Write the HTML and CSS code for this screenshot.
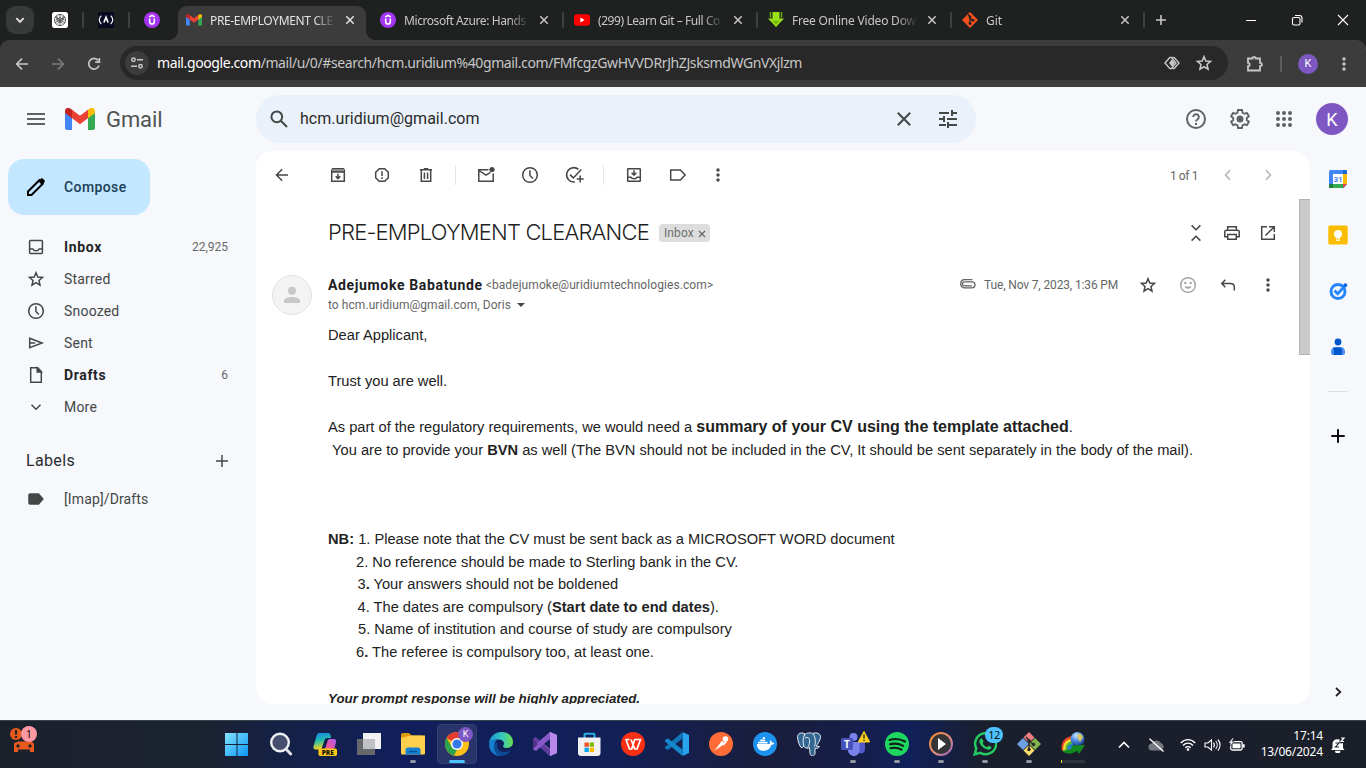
FILE: index.html
```html
<!DOCTYPE html>
<html lang="en">
<head>
<meta charset="utf-8">
<title>PRE-EMPLOYMENT CLEARANCE - Gmail</title>
<link rel="stylesheet" href="styles.css">
</head>
<body>
<svg class="defs" aria-hidden="true">
  <defs>
    <symbol id="x" viewBox="0 0 10 10"><path d="M1.3 1.3l7.4 7.4M8.7 1.3L1.3 8.7"/></symbol>
    <symbol id="dots" viewBox="0 0 20 20"><g fill="currentColor" stroke="none"><circle cx="10" cy="5" r="1.7"/><circle cx="10" cy="10" r="1.7"/><circle cx="10" cy="15" r="1.7"/></g></symbol>
    <symbol id="star" viewBox="0 0 20 20"><path d="M10 3.7l1.8 4.3 4.7.4-3.5 3.1 1 4.6-4-2.4-4 2.4 1-4.6-3.5-3.1 4.7-.4z"/></symbol>
    <symbol id="clock" viewBox="0 0 20 20"><circle cx="10" cy="10" r="7.3"/><path d="M9.9 5.3v5.2l3 3"/></symbol>
    <symbol id="udemy" viewBox="0 0 16 16"><circle cx="8" cy="8" r="8" fill="#a435f0" stroke="none"/><path d="M5.3 5L8 3.4 10.700 5M5.700 6.600v3.100a2.300 2.300 0 0 0 4.600 0V6.600" stroke="#fff" stroke-width="1.600"/></symbol>
    <symbol id="gmail" viewBox="0 0 30 22"><g stroke="none"><path fill="#4285f4" d="M0 5v15a2 2 0 0 0 2 2h5V8z"/><path fill="#34a853" d="M30 5v15a2 2 0 0 1-2 2h-5V8z"/><path fill="#ea4335" d="M6.800 1.600L15 7.800l8.200-6.200v8.400L15 16.200 6.800 10z"/><path fill="#c5221f" d="M0 3.200C0 .4 3-.9 5.200.5L7 1.800v8.500L0 5z"/><path fill="#fbbc04" d="M30 3.200C30 .4 27-.9 24.800.5L23 1.800v8.500L30 5z"/></g></symbol>
  </defs>
</svg>

<div class="tabstrip">
  <button class="tab-search"><svg width="10" height="10" viewBox="0 0 10 10"><path d="M1.300 3.200L5 6.900l3.700-3.700" stroke-width="1.800"/></svg></button>
  <div class="pinned"><svg width="16" height="16" viewBox="0 0 16 16"><rect width="16" height="16" rx="2.500" fill="#fff"/><g stroke="#333" stroke-width=".75"><circle cx="8" cy="8" r="5.600"/><path d="M8 2.400v5.400l4.800 3M3.200 5l4.800 2.900-5 2.900M13 5L8 8v5.600M5 4v4l5.500 3.300M11 4v4l-5.500 3.300M3.500 8.500L8 5.500l4.700 2.700"/></g></svg></div>
  <div class="pinned ruled"><svg width="16" height="16" viewBox="0 0 16 16"><rect width="16" height="16" fill="#0a0a23"/><g stroke="#fff" stroke-width="1.200"><path d="M3.300 3.800C.6 6 .6 9.500 3.300 12M12.700 3.800c2.700 2.200 2.700 5.700 0 8.200"/><path d="M5.900 10.500L8 5.200l2.100 5.300" stroke-width="1.700"/></g></svg></div>
  <div class="pinned ruled"><svg width="16" height="16"><use href="#udemy"/></svg></div>

  <div class="tab active"><svg class="fav" viewBox="0 -4 30 30"><use href="#gmail" width="30" height="22"/></svg><span class="tab-title t1">PRE-EMPLOYMENT CLE</span><svg class="tab-x"><use href="#x"/></svg></div>
  <div class="tab"><svg class="fav"><use href="#udemy"/></svg><span class="tab-title t2">Microsoft Azure: Hands</span><svg class="tab-x"><use href="#x"/></svg></div>
  <div class="tab ruled"><svg class="fav" viewBox="0 0 16 16"><rect y="2.300" width="16" height="11.500" rx="3" fill="#f00"/><path d="M6.400 5.600L10.600 8l-4.200 2.400z" fill="#fff"/></svg><span class="tab-title t3">(299) Learn Git – Full Co</span><svg class="tab-x"><use href="#x"/></svg></div>
  <div class="tab ruled"><svg class="fav" viewBox="0 0 16 16"><path d="M4.500 0h7v6.500H16L8 15 0 6.500h4.500z" fill="#9be319"/><path d="M2.500 0v5.500M13.500 0v5.500" stroke="#6fae10" stroke-width="1.500"/><path d="M4 8.500h8L8 13z" fill="#79bd0a"/></svg><span class="tab-title t4">Free Online Video Dow</span><svg class="tab-x"><use href="#x"/></svg></div>
  <div class="tab ruled last"><svg class="fav" viewBox="0 0 16 16"><path d="M8 0l8 8-8 8-8-8z" fill="#f4511e"/><path d="M6 2.500l2 2.200v7M8 6l3 2.500" stroke="#1f2020" stroke-width="1.200"/><g fill="#1f2020"><circle cx="8" cy="5" r="1.400"/><circle cx="8" cy="11.500" r="1.400"/><circle cx="11" cy="8.300" r="1.400"/></g></svg><span class="tab-title t5">Git</span><svg class="tab-x"><use href="#x"/></svg></div>
  <div class="newtab"><svg width="12" height="12" viewBox="0 0 12 12"><path d="M6 1v10M1 6h10" stroke-width="1.600"/></svg></div>
  <div class="wincontrols">
    <svg viewBox="0 0 12 12"><path d="M1 6.500h10" stroke-width="1"/></svg>
    <svg viewBox="0 0 12 12"><rect x="1.500" y="3.500" width="7.500" height="7.500" rx="1.500"/><path d="M4 1.500h4.500a2.500 2.500 0 0 1 2.500 2.500v4.500"/></svg>
    <svg viewBox="0 0 12 12"><path d="M1 1l10 10M11 1L1 11"/></svg>
  </div>
</div>

<div class="toolbar">
  <div class="navbtn"><svg width="16" height="16" viewBox="0 0 16 16"><path d="M14 8H3M8 2.700L2.700 8 8 13.300"/></svg></div>
  <div class="navbtn off"><svg width="16" height="16" viewBox="0 0 16 16"><path d="M2 8h11M8 2.700L13.300 8 8 13.300"/></svg></div>
  <div class="navbtn"><svg width="16" height="16" viewBox="0 0 16 16"><path d="M13 9.500A5.300 5.300 0 1 1 12.200 4.500M13.400 2v4.200H9.200"/></svg></div>
  <div class="omnibox">
    <span class="site"><svg width="14" height="14" viewBox="0 0 14 14"><circle cx="3.500" cy="3.800" r="1.700"/><path d="M7 3.800h6M1 10.200h6"/><circle cx="10.500" cy="10.200" r="1.700"/></svg></span>
    <span class="url"><b>mail.google.com</b>/mail/u/0/#search/hcm.uridium%40gmail.com/FMfcgzGwHVVDRrJhZJsksmdWGnVXjlzm</span>
    <svg class="omni-ic" viewBox="0 0 16 16"><path d="M5.800 2.500h1.700L12 8l-4.500 5.500H5.800L1 8zM10.200 2.500H8.500M8.500 13.500h1.700L15 8l-4.800-5.500"/><path d="M8 4.300L11 8l-3 3.700L5 8z" fill="#c7c7c7" stroke="none"/></svg>
    <svg class="omni-ic star" viewBox="2 2 16 16"><use href="#star" width="20" height="20"/></svg>
  </div>
  <svg class="ext" viewBox="0 0 18 18"><path d="M2 3.500h4.500c0-2.200 3.200-2.200 3.200 0H14v4.400c2.600 0 2.600 3.200 0 3.200v4.400H2v-4.300c2.200 0 2.200-3.400 0-3.400z"/></svg>
  <i class="tb-rule"></i>
  <span class="profile">K</span>
  <svg class="kebab" viewBox="0 0 20 20"><use href="#dots"/></svg>
</div>

<div class="gmail">
  <header class="ghead">
    <div class="brand">
      <svg class="burger" viewBox="0 0 18 12"><path d="M0 1h18M0 6h18M0 11h18"/></svg>
      <svg class="glogo"><use href="#gmail"/></svg>
      <span class="gword">Gmail</span>
    </div>
    <div class="search">
      <svg class="s-ic" viewBox="0 0 20 20"><circle cx="7.800" cy="7.800" r="5.400"/><path d="M11.800 11.800l6.200 6.200"/></svg>
      <span class="query">hcm.uridium@gmail.com</span>
      <svg class="s-x" viewBox="0 0 14 14"><path d="M.8.8l12.400 12.400M13.200.8L.8 13.200"/></svg>
      <svg class="s-tune" viewBox="0 0 18 18"><path d="M0 3h10M13 3h5M13 0v6M0 9h5M8 9h10M5 6v6M0 15h7M9 15h9M9 12v6"/></svg>
    </div>
    <div class="hright">
      <svg class="i24" viewBox="0 0 24 24"><circle cx="12" cy="12" r="9"/><path d="M9.200 10a2.800 2.800 0 1 1 4.500 2.200c-1 .7-1.700 1.300-1.700 2.300"/><path d="M12 16v2"/></svg>
      <svg class="i24" viewBox="0 0 24 24"><path stroke-width="1.900" d="M10 3h4l.5 2.700 1.900 1.100 2.500-.9 2 3.400-2.100 1.700v2.100l2.100 1.700-2 3.400-2.500-.9-1.900 1.100L14 21h-4l-.5-2.600-1.900-1.100-2.500.9-2-3.400 2.100-1.700V11L3.100 9.300l2-3.400 2.500.9 1.900-1.100z"/><circle cx="12" cy="12" r="3.500" fill="currentColor" stroke="none"/></svg>
      <svg class="i24" viewBox="0 0 24 24"><g fill="currentColor" stroke="none"><circle cx="6" cy="6" r="2"/><circle cx="12" cy="6" r="2"/><circle cx="18" cy="6" r="2"/><circle cx="6" cy="12" r="2"/><circle cx="12" cy="12" r="2"/><circle cx="18" cy="12" r="2"/><circle cx="6" cy="18" r="2"/><circle cx="12" cy="18" r="2"/><circle cx="18" cy="18" r="2"/></g></svg>
      <span class="gavatar">K</span>
    </div>
  </header>

  <div class="gbody">
    <nav class="side">
      <button class="compose"><svg viewBox="0 0 20 20"><path d="M2 18v-3.500L13.300 3.200l3.500 3.500L5.500 18z" stroke="#000" stroke-width="2"/><path d="M12.300 4.200L15 1.500c.5-.5 1.200-.5 1.700 0l1.800 1.800c.5.5.5 1.200 0 1.700l-2.700 2.700z" fill="#000"/></svg>Compose</button>
      <div class="folder bold"><svg viewBox="0 0 20 20"><rect x="3.600" y="3.600" width="12.800" height="12.800" rx="1"/><path d="M3.600 12h3.200c1 2.300 5.400 2.300 6.400 0h3.200"/></svg><span class="fn f-inbox">Inbox</span><span class="cnt">22,925</span></div>
      <div class="folder"><svg viewBox="0 0 20 20"><use href="#star"/></svg><span class="fn">Starred</span></div>
      <div class="folder"><svg viewBox="0 0 20 20"><use href="#clock"/></svg><span class="fn">Snoozed</span></div>
      <div class="folder"><svg viewBox="0 0 20 20"><path d="M3.700 5.300L16 10 3.700 14.700zM3.700 10h5.500"/></svg><span class="fn">Sent</span></div>
      <div class="folder bold"><svg viewBox="0 0 20 20"><path d="M4.700 2.800h7l3.600 3.700v10.700H4.700z"/><path d="M11.200 3v4h4z" fill="currentColor"/></svg><span class="fn f-drafts">Drafts</span><span class="cnt">6</span></div>
      <div class="folder"><svg viewBox="0 0 20 20"><path d="M5.500 7.800l4.500 4.400 4.500-4.400"/></svg><span class="fn">More</span></div>
      <div class="labels"><span>Labels</span><svg viewBox="0 0 12 12"><path d="M6 0v12M0 6h12"/></svg></div>
      <div class="folder imap"><svg viewBox="0 0 20 20"><path d="M4 5h8.500l4.300 5-4.300 5H4c-.8 0-1-.4-1-1V6c0-.6.300-1 1-1z" fill="currentColor"/></svg><span class="fn">[Imap]/Drafts</span></div>
    </nav>

    <main class="card">
      <div class="actions">
        <span class="a back"><svg viewBox="0 0 20 20"><path d="M16 10H4.800M10.200 4.300L4.500 10l5.700 5.700"/></svg></span>
        <span class="a"><svg viewBox="0 0 20 20"><path d="M3.700 5.300l1-1.600h10.600l1 1.600v11H3.700z"/><path d="M4 4h12v3H4z" fill="#8c8e8f" stroke="none"/><path d="M3.700 7h12.600M10 8.800v4.500M7.700 11.300l2.300 2.300 2.300-2.300"/></svg></span>
        <span class="a"><svg viewBox="0 0 20 20"><path d="M7.300 3.700h5.400l3.600 3.600v5.400l-3.600 3.600H7.300l-3.600-3.600V7.300z"/><path d="M10 6.200v4.800M10 12.300v1.700"/></svg></span>
        <span class="a"><svg viewBox="0 0 20 20"><path d="M4 4.800h12M7.800 3.700h4.400M5.300 5v11.300h9.400V5M8.400 7.500v6.500M11.600 7.500v6.500"/></svg></span>
        <i class="sep"></i>
        <span class="a"><svg viewBox="0 0 20 20"><path d="M12.500 4.700H2.800v11.600h14.400V8.500M3 5.500l7 4.700 4.500-2.900"/><circle cx="16" cy="4.500" r="2.600" fill="currentColor" stroke="none"/></svg></span>
        <span class="a"><svg viewBox="0 0 20 20"><use href="#clock"/></svg></span>
        <span class="a"><svg viewBox="0 0 20 20"><path d="M14.500 4.400A7.200 7.200 0 1 0 10.800 17M6 9.600l3.300 3.300 8-8.400M16.200 10.500v7M12.700 14h7"/></svg></span>
        <i class="sep"></i>
        <span class="a"><svg viewBox="0 0 20 20"><rect x="3.700" y="3.700" width="12.600" height="12.600" rx=".6"/><path d="M3.700 12.300h3.200c.8 2 5.400 2 6.200 0h3.200M10 5.200v4.500M7.600 7.800l2.400 2.400 2.400-2.400"/></svg></span>
        <span class="a"><svg viewBox="0 0 20 20"><path d="M2.700 5h9.700l4.700 5-4.700 5H2.700z"/></svg></span>
        <span class="a narrow"><svg viewBox="0 0 20 20"><use href="#dots"/></svg></span>
        <span class="pager">1 of 1</span>
        <span class="a pg"><svg viewBox="0 0 20 20"><path d="M12 5.300L7.500 10l4.500 4.700"/></svg></span>
        <span class="a pg"><svg viewBox="0 0 20 20"><path d="M8 5.300l4.500 4.700L8 14.700"/></svg></span>
      </div>

      <div class="reader">
        <div class="message">
          <div class="subject-row">
            <h1 class="subject">PRE-EMPLOYMENT CLEARANCE</h1>
            <span class="chip"><span>Inbox</span><svg viewBox="0 0 8 8"><path d="M1 1l6 6M7 1L1 7"/></svg></span>
            <span class="sub-icons">
              <svg viewBox="0 0 20 20"><path d="M5.600 2.400L10 6.700l4.400-4.300M5.600 17.600L10 13.300l4.400 4.300"/></svg>
              <svg viewBox="0 0 20 20"><path d="M5.700 7V3.700h8.600V7M5.500 13.800H2.800V9c0-1 .8-1.800 1.800-1.800h10.800c1 0 1.800.8 1.800 1.800v4.800h-2.700M5.700 11.600h8.600v4.700H5.700z"/></svg>
              <svg viewBox="0 0 20 20"><path d="M9 3.700H3.700v12.600h12.600V11M11 3.700h5.300V9M16.300 3.700L7.500 12.500"/></svg>
            </span>
          </div>
          <div class="sender">
            <span class="face"><svg viewBox="0 0 16 18"><circle cx="8" cy="4.700" r="4"/><path d="M0 17v-2.200c0-5 16-5 16 0V17z"/></svg></span>
            <div class="who">
              <div class="line1"><b>Adejumoke Babatunde</b><span class="addr">&lt;badejumoke@uridiumtechnologies.com&gt;</span></div>
              <div class="line2"><span class="to">to hcm.uridium@gmail.com, Doris</span><i class="caret"></i></div>
            </div>
            <div class="meta">
              <svg class="clip" viewBox="0 0 17 10"><path d="M13 7H5.500a2 2 0 0 1 0-4H13a3 3 0 0 1 0 6H5A4.200 4.200 0 0 1 5 .8h8.500" transform="translate(0 -.2)"/></svg>
              <span class="date">Tue, Nov 7, 2023, 1:36 PM</span>
              <svg class="m" viewBox="0 0 20 20"><use href="#star"/></svg>
              <svg class="m pale" viewBox="0 0 20 20"><circle cx="10" cy="10" r="7.300"/><path d="M6.500 11.500h7c-1 3-6 3-7 0z" fill="currentColor" stroke="none"/><circle cx="7.300" cy="8" r="1.200" fill="currentColor" stroke="none"/><circle cx="12.700" cy="8" r="1.200" fill="currentColor" stroke="none"/></svg>
              <svg class="m" viewBox="0 0 20 20"><path d="M7.300 4.800L3.800 8.500l3.500 3.700M4 8.500h8.300c2.500 0 4 1.400 4 3.500v3.500"/></svg>
              <svg class="m" viewBox="0 0 20 20"><use href="#dots"/></svg>
            </div>
          </div>
          <div class="mail">
            <p>Dear Applicant,</p>
            <p class="gap1">Trust you are well.</p>
            <p class="gap1 mixed">As part of the regulatory requirements, we would need a <b class="big">summary of your CV using the template attached</b>.</p>
            <p>&nbsp;You are to provide your <b>BVN</b> as well (The BVN should not be included in the CV, It should be sent separately in the body of the mail).</p>
            <ol class="notes">
              <li class="n1"><b>NB:</b> 1. Please note that the CV must be sent back as a MICROSOFT WORD document</li>
              <li class="n2">2. No reference should be made to Sterling bank in the CV.</li>
              <li class="n3">3<b>.</b> Your answers should not be boldened</li>
              <li class="n3">4. The dates are compulsory (<b>Start date to end dates</b>).</li>
              <li class="n5">5. Name of institution and course of study are compulsory</li>
              <li class="n2">6<b>.</b> The referee is compulsory too, at least one.</li>
            </ol>
            <p class="closing">Your prompt response will be highly appreciated.</p>
          </div>
        </div>
        <div class="scroll"><i></i></div>
      </div>
    </main>

    <aside class="rail">
      <svg viewBox="0 0 20 20"><rect x="1" y="1" width="18" height="18" rx="1.500" fill="#4285f4"/><path d="M15 1h3a1 1 0 0 1 1 1v3h-4z" fill="#1967d2"/><path d="M15 5h4v10h-4z" fill="#fbbc04"/><path d="M5 15h10v4H5z" fill="#34a853"/><path d="M1 15h4v4H2a1 1 0 0 1-1-1z" fill="#188038"/><path d="M15 15h4l-4 4z" fill="#ea4335"/><path d="M19 15.200V20h-4z" fill="#f6f8fc"/><path d="M5 5h10v10H5z" fill="#fff"/><text x="10" y="13" class="cal">31</text></svg>
      <svg viewBox="0 0 20 20"><rect x=".3" y=".5" width="19.400" height="19" rx="1.500" fill="#fbbc04"/><circle cx="10" cy="9" r="4" fill="#fff"/><path d="M8 12h4v1.500H8zM8 14.500h4v1.300H8z" fill="#fff"/></svg>
      <svg viewBox="0 0 20 20"><circle cx="10" cy="10.500" r="7" fill="none" stroke="#2684fc" stroke-width="2.900"/><path d="M6.500 9.500l3.200 3.200 7-7.500" fill="none" stroke="#2684fc" stroke-width="2.900"/><circle cx="17.300" cy="4.200" r="1.900" fill="#0066da"/></svg>
      <svg viewBox="0 0 20 20"><circle cx="10" cy="5" r="3.400" fill="#0057cc"/><path d="M3 14.500A4.500 4.500 0 0 1 7.500 10h5a4.500 4.500 0 0 1 4.500 4.500V16a2 2 0 0 1-2 2H5a2 2 0 0 1-2-2z" fill="#4f8df5"/><path d="M5.500 10.500h7A3.500 3.500 0 0 1 14 13v5H6z" fill="#0057cc"/></svg>
      <i class="rail-rule"></i>
      <svg class="rail-plus" viewBox="0 0 20 20"><path d="M10 3.300v13.400M3.300 10h13.400"/></svg>
      <svg class="rail-more" viewBox="0 0 20 20"><path d="M8 6l4.300 4L8 14"/></svg>
    </aside>
  </div>
</div>

<footer class="taskbar">
  <div class="widget"><svg width="30" height="30" viewBox="0 0 30 30"><circle cx="8" cy="8" r="6" fill="#e8591c"/><path d="M8 4v4.500M8 10v2" stroke="#20242c" stroke-width="2.200"/><path d="M9.500 16.500h13.500l-1.500-4.500h-5" stroke="#e8591c" stroke-width="2"/><path d="M6 18.500c0-1.500 1-2.300 2.500-2.300h15c1.500 0 2.500.8 2.500 2.300V26h-4v-2.500H10V26H6z" fill="#e8591c"/><circle cx="10" cy="20" r="1.700" fill="#20242c"/><circle cx="22" cy="20" r="1.700" fill="#20242c"/></svg><span class="alert">1</span></div>
  <div class="apps">
    <div class="app"><svg viewBox="0 0 24 24"><defs><linearGradient id="win" x1="0" y1="0" x2="1" y2="1"><stop offset="0" stop-color="#84e4ff"/><stop offset="1" stop-color="#0b95f5"/></linearGradient></defs><path d="M0 1h11.500v11H0zM12.500 1H23v11H12.500zM0 13h11.500v11H0zM12.500 13H23v11H12.500z" fill="url(#win)"/></svg></div>
    <div class="app"><svg viewBox="0 0 24 24"><circle cx="11" cy="10.500" r="8.800" fill="#454f6d" stroke="#eef0f4" stroke-width="2.400"/><path d="M17.500 17.500l4.200 4.500" stroke="#dfe2e8" stroke-width="3" stroke-linecap="round"/></svg></div>
    <div class="app"><svg viewBox="0 0 24 24"><defs><linearGradient id="co1" x1="0" y1="0" x2=".2" y2="1"><stop offset="0" stop-color="#1b80e8"/><stop offset=".5" stop-color="#1fbcae"/><stop offset="1" stop-color="#f5d51c"/></linearGradient><linearGradient id="co2" x1="1" y1="0" x2="0" y2="1"><stop offset="0" stop-color="#a45cf2"/><stop offset=".6" stop-color="#f2579a"/><stop offset="1" stop-color="#fb8b4c"/></linearGradient></defs><path d="M6 1h9c2 0 2.600 1.500 3.200 5h-4c-1.600 0-2.200.8-2.800 2.500L9 15.500C8.400 17 7.800 17.500 6.500 17.500H3C.5 17.500 0 16 .6 14L3.500 4C4 2.200 4.700 1 6 1z" fill="url(#co1)"/><path d="M16.500 7h4c2.500 0 3 1.500 2.500 3.500l-2 7C20.500 19 19.500 20 18 20H9c2-1 2.700-2 3.300-4l2-6c.5-2 1-3 2.200-3z" fill="url(#co2)"/><rect x="5.500" y="16.500" width="18.500" height="7.500" rx="1.700" fill="#ffc917"/><text class="pre" x="14.700" y="22.800">PRE</text></svg></div>
    <div class="app"><svg viewBox="0 0 24 24"><rect y="7" width="18" height="16" fill="#66686c"/><rect x="6" y="1" width="18" height="16" fill="#f1f1f2"/><path d="M6 7h12v10H6z" fill="#bfc1c5"/></svg></div>
    <div class="app run"><svg viewBox="0 0 24 24"><path d="M0 3c0-1 .5-2 2-2h6l2.500 2.500H22L20 8H0z" fill="#dc9a0b"/><path d="M0 6l9.500-2.500H24V21c0 1-.5 1.500-1.500 1.500h-21C.5 22.500 0 22 0 21z" fill="#ffd04c"/><path d="M4.500 22.500V18c0-1.500 1-2.500 2.500-2.500h10c1.500 0 2.500 1 2.500 2.500v4.500z" fill="#1680d4"/><path d="M8 19.500h8" stroke="#0a5295" stroke-width="1.500"/></svg></div>
    <div class="app current"><svg viewBox="0 0 24 24"><circle cx="12" cy="12" r="12" fill="#fbc116"/><path d="M12 12L1.600 6A12 12 0 0 1 22.400 6H12z" fill="#e33b2e"/><path d="M1.600 6l5.200 9 5.200 3-3.100 5.600A12 12 0 0 1 1.600 6z" fill="#2ba24c"/><circle cx="12" cy="12" r="6" fill="#fff"/><circle cx="12" cy="12" r="4.600" fill="#3379e8"/></svg><span class="kbadge">K</span></div>
    <div class="app"><svg viewBox="0 0 24 24"><defs><linearGradient id="edge"><stop offset="0" stop-color="#1592d8"/><stop offset=".55" stop-color="#38c9be"/><stop offset="1" stop-color="#66df4d"/></linearGradient></defs><path d="M0 12C0 5 5.500 0 12.500 0 20 0 24 5 24 10c0 4-2.800 6-6 6-2.500 0-4-.9-4-1.800 0-.7 1-.9 1-2.700 0-2.500-2.500-4-5.500-4C4.500 7.500.8 9.500 0 12z" fill="url(#edge)"/><path d="M0 12c.8-3 4.500-4.500 8.500-4.500C6 9 5.500 11.500 5.500 14c0 4.500 3 8.500 7 10C5 24.300 0 19 0 12z" fill="#147dcd"/><path d="M9 10.500c-3 6 2.500 11 8.500 9.200 2-.6 3.500-1.400 4.500-2-2 4-6 6.300-10 6.300-5-1-8-6-6.500-10.500.6-1.700 1.800-2.800 3.500-3z" fill="#0c4b93"/></svg></div>
    <div class="app"><svg viewBox="0 0 24 24"><path d="M17 0l7 3v18l-7 3L4 12z" fill="#a877df"/><path d="M0 6.500L3 5l14 13v6L0 9z" fill="#5f3c9e"/><path d="M0 17.500L3 19 17 7V0L4 11l-4-3z" fill="#8759c6"/><path d="M0 7l5 5-5 5z" fill="#513087"/><path d="M17 7v10l-6-5z" fill="#152058"/><path d="M17 0l7 3v18l-7 3z" fill="#b78ae9"/></svg></div>
    <div class="app"><svg viewBox="0 0 24 24"><path d="M7.500 6V2.500C7.500 2 8 1.700 8.500 1.700h8c.5 0 1 .3 1 .8V6" stroke="#25afe9" stroke-width="2"/><path d="M1 5.500h22.500V21c0 2-1 3-3 3H4c-2 0-3-1-3-3z" fill="#f1f1f2"/><path d="M7.500 10.500h4.300v4.300H7.500z" fill="#f25022"/><path d="M12.700 10.500H17v4.300h-4.300z" fill="#7fba00"/><path d="M7.500 15.700h4.300V20H7.500z" fill="#00a4ef"/><path d="M12.700 15.700H17V20h-4.300z" fill="#ffb900"/></svg></div>
    <div class="app"><svg viewBox="0 0 24 24"><circle cx="12" cy="12" r="12" fill="#fb2f13"/><path d="M8.500 7.500H5L8.500 17h2.200l3-9.500h5.800L16 17h-2.200L10 7.500" stroke="#fff" stroke-width="1.700" stroke-linejoin="round"/></svg></div>
    <div class="app"><svg viewBox="0 0 24 24"><path d="M17.500 0L24 3v18l-6.500 3z" fill="#27a4ed"/><path d="M17.500 0v6.500L3 18 0 16.500v-1.500z" fill="#1076b8"/><path d="M17.500 24v-6.500L3 6.500 0 8v1.500z" fill="#1389cd"/></svg></div>
    <div class="app"><svg viewBox="0 0 24 24"><circle cx="12" cy="12" r="12" fill="#ff6c37"/><path d="M5.500 18.500l7-9 3 2.500-7.500 5z" fill="#fff"/><path d="M12.500 9.500l2.500 2.500 2-2.500" stroke="#fff" stroke-width="2"/><circle cx="16.500" cy="7" r="2.800" fill="#fff"/></svg></div>
    <div class="app"><svg viewBox="0 0 24 24"><circle cx="12" cy="12" r="12" fill="#1d93ed"/><path d="M4 12h12.500c.8-.5.8-2 0-3l.8-.8c1 .7 1.500 1.600 1.500 2.500.9-.2 1.700 0 2.400.5-.6 1.200-1.600 1.700-3 1.700C17 17 14 18.700 10 18.700c-4 0-6.200-2.700-6-6.700z" fill="#fff"/><path d="M5 9.800h9.500v1.700H5zM7.300 7.600h4.800v1.700H7.300zM9.800 5.300H12V7H9.800z" fill="#fff"/></svg></div>
    <div class="app"><svg viewBox="0 0 24 24"><g stroke="#e9eef2" stroke-width="1" fill="#336791"><path d="M7.500 1.500C3 0 0 2 .6 6c.5 3.500 2 8 3.500 9.500 1 .8 2-.5 3-2z"/><path d="M15.500 1.500c4-1.500 8.500 0 8 4-.4 3-3 7-4.500 8.500l3.500.5c-1 2-3 2-4.500 1.800v5.200c-.3 3-4.500 3.500-5 0l-.5-6c-2 1.500-5 .5-5.500-1C6 11 5.500 6 7.500 3c2-2.500 6-2.500 8-1.500z"/><path d="M8 6c3-1.500 5 0 4.500 4s-1 4-2 5.500M16 2c2.500 3.500 3 8 1.500 12.500" fill="none"/></g></svg></div>
    <div class="app run"><svg viewBox="0 0 24 24"><circle cx="12.500" cy="5" r="4" fill="#7b83eb"/><circle cx="20.500" cy="8.500" r="2.700" fill="#5059c9"/><path d="M16 10h8v7c0 3-2 4.500-4.500 4.500L16 20z" fill="#5059c9"/><path d="M7 10h11.500v8c0 3.500-2.500 6-5.500 6s-6-2.500-6-6z" fill="#7b83eb"/><rect y="6" width="12" height="12" rx="1.300" fill="#4651bd"/><text class="teams" x="6" y="15.500">T</text></svg><svg class="warn" viewBox="0 0 12 12"><path d="M6 .5L11.700 11H.3z" fill="#ffd21c" stroke="#ffd21c" stroke-linejoin="round"/><path d="M6 3.500v4M6 8.700v1.200" stroke="#222" stroke-width="1.400"/></svg></div>
    <div class="app run"><svg viewBox="0 0 24 24"><circle cx="12" cy="12" r="12" fill="#1ed760"/><path d="M4.500 8c5.500-1.700 11-1 15.500 1.500M5 12.300c4.500-1.300 9-.8 13.200 1.500M5.500 16.300c4-1 7.500-.6 11 1.400" stroke="#102018" stroke-width="2.100" stroke-linecap="round"/></svg></div>
    <div class="app run"><svg viewBox="0 0 24 24"><defs><linearGradient id="mp" x1="0" y1="0" x2="1" y2="1"><stop offset="0" stop-color="#f38b2c"/><stop offset=".6" stop-color="#d88a85"/><stop offset="1" stop-color="#9560c4"/></linearGradient></defs><circle cx="12" cy="12" r="11" fill="#353538" stroke="url(#mp)" stroke-width="2"/><path d="M9 6l8 6-8 6z" fill="#fff"/></svg></div>
    <div class="app run"><svg viewBox="0 0 24 24"><path d="M1.700 22.300l1.600-5.900A10.500 10.500 0 1 1 7.500 20.800z" stroke="#25c961" stroke-width="2.500"/><path d="M8.500 6.500c1-.3 1.500 2 2 3 .2.700-1 1.300-.7 2 1 1.800 2.200 2.800 4 3.500.8.300 1.300-1.500 2-1.300l2.700 1.300c0 2-2 3-3.500 2.700-4-.8-7-3.500-8.500-7-.7-1.700.2-3.800 2-4.200z" fill="#25c961"/></svg><span class="count12">12</span></div>
    <div class="app run"><svg viewBox="0 0 24 24"><path d="M12 0l5.500 5.500L12 11 6.500 5.500z" fill="#f17d80"/><path d="M18 6l6 6-6 6-6-6z" fill="#80b34e"/><path d="M6 6l6 6-6 6-6-6z" fill="#6f9fe4"/><path d="M12 13l5.500 5.500L12 24l-5.500-5.500z" fill="#ffdf69"/><path d="M9 5l3 3.500v9M12 9l4 3" stroke="#2d2d2d" stroke-width="1.500"/><g fill="#2d2d2d"><circle cx="12" cy="8.500" r="1.700"/><circle cx="12" cy="17.500" r="1.800"/><circle cx="16.500" cy="12.500" r="1.800"/></g></svg></div>
    <div class="app idm"><svg viewBox="0 0 24 24"><defs><radialGradient id="globe" cx=".4" cy=".25" r=".8"><stop offset="0" stop-color="#c7e2ff"/><stop offset=".5" stop-color="#4a86de"/><stop offset="1" stop-color="#153a8c"/></radialGradient></defs><path d="M1 19C-1 11 3.500 5 11 4v13z" fill="#e8442a"/><path d="M2.300 19.500C1 12 5 7.300 11.500 6.500v11z" fill="#f6dc2c"/><path d="M4.500 19C3.500 13.500 6.500 9.700 12 9v8z" fill="#4dbb3a"/><path d="M6.500 18c-.5-3.500 1.500-6 5.500-6.500v6z" fill="#2a7be0"/><circle cx="16.500" cy="7" r="7" fill="url(#globe)"/><path d="M17 1.500l3.500 1 1.500 3-3 4.500-2.500-4z" fill="#d7c768"/><path d="M1 18.500c4.500 0 8-.8 10.500-3l-2.500-2L24 13l-6 9-2-3.300C11.500 22.500 4 22.500 1 18.500z" fill="#128a22"/></svg></div>
  </div>
  <div class="tray">
    <span class="tr"><svg width="12" height="8" viewBox="0 0 12 8"><path d="M1 6.500l5-5 5 5" stroke-width="1.600"/></svg></span>
    <span class="tr"><svg width="17" height="14" viewBox="0 0 17 14"><path d="M4 12.500a3.500 3.500 0 0 1 0-7 5 5 0 0 1 9-.5 4 4 0 0 1 0 7.500z" fill="#757982" stroke="none"/><path d="M1.500.8l14 12.700" stroke-width="1.400"/></svg></span>
    <span class="tr"><svg width="16" height="13" viewBox="0 0 16 13"><path d="M.8 5C5 .5 11 .5 15.200 5M3 7.500c3-3 7-3 10 0M5.300 9.800c1.500-1.500 3.900-1.500 5.400 0" stroke-width="1.400"/><circle cx="8" cy="11.500" r="1.300" fill="#fff" stroke="none"/></svg></span>
    <span class="tr spk"><svg width="17" height="14" viewBox="0 0 17 14"><path d="M1 5v4h2.800L7.500 12V2L3.800 5zM9.500 4.700c1 1.300 1 3.300 0 4.600M11.700 3c2 2.300 2 5.700 0 8M13.800 1.500c3 3.200 3 7.800 0 11" stroke-width="1.100"/></svg></span>
    <span class="tr bat"><svg width="17" height="13" viewBox="0 0 17 13"><rect x="2.700" y="3.600" width="11.500" height="8.400" rx="1.500" stroke-width="1.300"/><path d="M4.500 5.500h8v4.700h-8zM14.800 6.300h1.900v3.200h-1.900z" fill="#fff" stroke="none"/><path d="M4.500 0L.5 5h2.200l-.8 3.500L6 3.500H3.800L6 0z" fill="#fff" stroke="#1b1f2b" stroke-width=".5"/></svg></span>
    <div class="clock"><span class="time">17:14</span><span class="day">13/06/2024</span></div>
    <svg class="bell" viewBox="0 0 16 16"><path d="M2.500 11V7a4.500 4.500 0 0 1 5-4.700h2V6.300H13V11l1.500 2H1z" fill="#fff"/><path d="M5 13.800h5.500a2.700 2.700 0 0 1-5.500 0z" fill="#fff"/><path d="M11 1h3L11 4.500h3" stroke="#fff" stroke-width="1.200"/><path d="M5.500 6h3.500l-3.500 4H9" stroke="#1b1f2b" stroke-width="1.100"/></svg>
  </div>
</footer>
</body>
</html>
```
FILE: styles.css
```css
* { box-sizing: border-box; margin: 0; padding: 0; }
body { width: 1366px; height: 768px; overflow: hidden; display: flex; flex-direction: column; background: #f6f8fc; font-family: Roboto, "Liberation Sans", sans-serif; color: #202124; }
button { border: 0; font: inherit; }
svg { display: block; flex: none; fill: none; stroke-linecap: butt; }
.defs { position: absolute; width: 0; height: 0; }

/* Tab strip */
.tabstrip { height: 40px; flex: none; background: #1f2120; display: flex; align-items: center; padding-left: 6px; font-family: "Noto Sans", "Open Sans", sans-serif; font-size: 12px; color: #c7c7c7; stroke: #c7c7c7; }
.tab-search { width: 28px; height: 28px; border-radius: 9px; background: #383939; display: grid; place-items: center; margin-right: 3px; stroke: #e3e3e3; }
.pinned { width: 46px; height: 40px; display: grid; place-items: center; position: relative; stroke: none; }
.ruled { position: relative; }
.ruled::before { content: ""; position: absolute; left: -1px; top: 12px; width: 2px; height: 16px; background: #3f4040; }
.tab { width: 194px; height: 40px; display: flex; align-items: center; padding-left: 11px; position: relative; flex: none; }
.tab.last { width: 193px; }
.tab.last .tab-x { margin-left: 9px; }
.tab.active { z-index: 1; color: #e3e3e3; stroke: #e3e3e3; }
.tab.active::before { content: ""; position: absolute; z-index: -1; left: 3px; right: 3px; top: 6px; bottom: 0; background: #3c3c3c; border-radius: 9px 9px 0 0; }
.tab.active::after { content: ""; position: absolute; z-index: -2; left: -6px; right: -6px; bottom: 0; height: 9px; background: radial-gradient(circle at 0 0, transparent 8.500px, #3c3c3c 9px) left / 9px 9px no-repeat, radial-gradient(circle at 100% 0, transparent 8.500px, #3c3c3c 9px) right / 9px 9px no-repeat; }
.fav { width: 16px; height: 16px; margin-right: 8px; stroke: none; }
.tab-title { width: 125px; white-space: nowrap; -webkit-mask-image: linear-gradient(90deg, #000 104px, transparent 126px); mask-image: linear-gradient(90deg, #000 104px, transparent 126px); }
.t1 { letter-spacing: -.35px; }
.t2, .t3 { letter-spacing: -.42px; }
.t4 { letter-spacing: -.2px; }
.tab-x { width: 10px; height: 10px; margin-left: 10px; stroke-width: 1.500; }
.newtab { width: 34px; display: grid; place-items: center; position: relative; }
.newtab::before { content: ""; position: absolute; left: -1px; top: -2px; width: 2px; height: 16px; background: #3f4040; }
.wincontrols { margin-left: auto; display: flex; gap: 34px; padding-right: 17px; stroke: #fff; stroke-width: 1.100; }
.wincontrols svg { width: 12px; height: 12px; }

/* Browser toolbar */
.toolbar { height: 47px; flex: none; background: linear-gradient(#1f2120, #1f2120) 0 0 / 100% 8px no-repeat; display: flex; align-items: center; padding-left: 4px; position: relative; z-index: 0; stroke: #c7c7c7; }
.toolbar::before { content: ""; position: absolute; inset: 0; z-index: -1; background: #3c3c3c; border-radius: 9px 9px 0 0; }
.navbtn { width: 36px; display: grid; place-items: center; stroke-width: 1.700; }
.navbtn.off { stroke: #7b7b7b; }
.omnibox { width: 1108px; height: 34px; margin: 0 0 1px 8px; border-radius: 17px; background: #282828; display: flex; align-items: center; padding: 0 16px 0 5px; }
.site { width: 24px; height: 24px; border-radius: 50%; background: #3c3c3c; display: grid; place-items: center; stroke-width: 1.500; }
.url { margin: -1px 0 0 8px; flex: 1; font: 14px "Noto Sans", "Open Sans", sans-serif; color: #c7c7c7; letter-spacing: -.4px; white-space: nowrap; }
.url b { font-weight: 400; color: #fff; }
.omni-ic { width: 16px; height: 16px; stroke-width: 1.400; }
.omni-ic.star { margin-left: 16px; stroke-width: 1.600; }
.ext { width: 18px; height: 18px; margin-left: 18px; stroke-width: 1.800; }
.tb-rule { width: 2px; height: 16px; margin-left: 16px; background: #5c5c5c; }
.profile { width: 20px; height: 20px; border-radius: 50%; margin-left: 16px; background: #7e57c2; color: #fff; font-size: 11px; display: grid; place-items: center; }
.kebab { width: 20px; height: 20px; margin-left: 16px; color: #c7c7c7; }

/* Gmail header */
.gmail { flex: 1; min-height: 0; display: flex; flex-direction: column; }
.ghead { height: 64px; flex: none; display: flex; align-items: center; }
.brand { width: 256px; display: flex; align-items: center; padding-left: 27px; }
.burger { width: 18px; height: 12px; stroke: #5f6368; stroke-width: 2; }
.glogo { width: 30px; height: 22px; margin-left: 20px; }
.gword { margin: 2px 0 0 11px; font-size: 22px; line-height: 24px; color: #505352; letter-spacing: -.1px; }
.search { width: 720px; height: 48px; border-radius: 24px; background: #eaf1fb; display: flex; align-items: center; padding-left: 13px; stroke: #444746; stroke-width: 2; }
.s-ic { width: 20px; height: 20px; }
.query { width: 597px; margin: -2px 0 0 11px; font-size: 16px; color: #2a2b2c; letter-spacing: .03px; }
.s-x, .s-tune { margin-top: -1px; }
.s-x { width: 14px; height: 14px; }
.s-tune { width: 18px; height: 18px; margin-left: 28px; }
.hright { margin-left: auto; padding-right: 18px; display: flex; align-items: center; gap: 20px; color: #5f6368; stroke: #5f6368; stroke-width: 2; }
.i24 { width: 24px; height: 24px; }
.gavatar { width: 32px; height: 32px; border-radius: 50%; background: #7e57c2; color: #fff; font-size: 18px; display: grid; place-items: center; }

/* Sidebar */
.gbody { flex: 1; min-height: 0; display: flex; padding-bottom: 16px; }
.side { width: 256px; flex: none; padding-top: 8px; font-size: 14px; color: #444746; stroke: #444746; }
.compose { width: 142px; height: 56px; margin: 0 0 16px 8px; padding-left: 18px; border-radius: 16px; background: #c2e7ff; display: flex; align-items: center; color: #1a405a; font-weight: 500; letter-spacing: .4px; }
.compose svg { width: 20px; height: 20px; margin-right: 18px; stroke: none; }
.folder { height: 32px; display: flex; align-items: center; padding: 0 28px 0 26px; letter-spacing: .2px; }
.folder svg { width: 20px; height: 20px; margin-right: 18px; stroke-width: 1.500; }
.folder.bold .fn { font-weight: 700; color: #242526; letter-spacing: .65px; }
.cnt { margin-left: auto; font-size: 12px; letter-spacing: 0; color: #666968; }
.labels { height: 32px; margin-top: 22px; padding: 0 28px 0 26px; display: flex; align-items: center; justify-content: space-between; font-size: 16px; color: #2a2b2c; letter-spacing: .35px; }
.labels span { margin-top: -2px; }
.labels svg { width: 12px; height: 12px; stroke-width: 1.500; }
.imap { margin-top: 6px; }
.imap .fn { letter-spacing: .13px; }

/* Message card */
.card { width: 1054px; background: #fff; border-radius: 16px; overflow: hidden; display: flex; flex-direction: column; }
.actions { height: 48px; flex: none; display: flex; align-items: center; padding-right: 22px; color: #444746; stroke: #444746; stroke-width: 1.500; }
.a { width: 44px; display: grid; place-items: center; }
.a svg { width: 20px; height: 20px; }
.a.back { width: 52px; margin-right: 8px; }
.a.narrow { width: 36px; }
.a.pg { width: 40px; stroke: #b0b1b1; }
.sep { width: 1px; height: 20px; margin: 0 8px 0 7px; background: #e4e5e7; }
.pager { margin-left: auto; margin-right: 10px; font-size: 12px; color: #666; letter-spacing: -.4px; padding-top: 2px; }
.reader { flex: 1; min-height: 0; display: flex; }
.message { width: 1043px; padding-left: 16px; overflow: hidden; }
.scroll { width: 11px; }
.scroll i { display: block; height: 156px; background: #cacaca; border: solid #b3b3b3; border-width: 1px 0 1px 1px; }
.subject-row { height: 68px; display: flex; align-items: center; padding: 0 21px 0 56px; }
.subject { font: 300 22px Inter, Roboto, sans-serif; color: #1f1f1f; letter-spacing: -.82px; white-space: nowrap; width: 331px; margin-top: -2px; }
.chip { width: 51px; height: 18px; border-radius: 4px; background: #ddd; display: flex; align-items: center; padding-left: 5px; font-size: 12px; color: #707070; letter-spacing: .1px; }
.chip svg { width: 8px; height: 8px; margin: 2px 0 0 4px; stroke: #666; stroke-width: 1.200; }
.sub-icons { margin-left: auto; display: flex; gap: 16px; stroke: #444746; stroke-width: 1.500; }
.sub-icons svg { width: 20px; height: 20px; }
.sender { height: 56px; display: flex; padding-top: 8px; }
.face { width: 40px; height: 40px; border-radius: 50%; background: #f3f3f3; border: 1px solid #e2e2e2; display: grid; place-items: center; margin-right: 16px; }
.face svg { width: 16px; height: 18px; fill: #c8c8c8; }
.who { flex: 1; }
.line1, .line2 { height: 20px; line-height: 20px; white-space: nowrap; display: flex; align-items: center; }
.line1 b { font-size: 14px; letter-spacing: .65px; margin-right: 3px; }
.addr { font-size: 12px; color: #666; letter-spacing: .08px; }
.line2 { font-size: 12px; color: #666; letter-spacing: .06px; }
.caret { margin-left: 6px; border: 4px solid transparent; border-top-color: #444746; border-bottom: 0; }
.meta { height: 20px; display: flex; align-items: center; padding-right: 21px; color: #444746; stroke: #444746; stroke-width: 1.500; }
.clip { width: 17px; height: 10px; margin: -3px 8px 0 0; stroke: #666; stroke-width: 1.300; }
.date { width: 154px; font-size: 12px; color: #666; white-space: nowrap; letter-spacing: -.14px; }
.m { width: 20px; height: 20px; }
.m + .m { margin-left: 20px; }
.m.pale { color: #a5a6a6; stroke: #a5a6a6; }

/* Letter */
.mail { padding: 1px 0 0 56px; font: 14.667px/23px "Liberation Sans", Arial, sans-serif; color: #222; }
.mail p, .mail li { height: 23px; white-space: pre; }
.mail .gap1 { margin-top: 23px; }
.mail .mixed { line-height: 21px; }
.mail .big { font-size: 16px; }
.notes { list-style: none; margin-top: 66px; }
.mail .notes li { height: 22.600px; line-height: 23px; }
.n2 { padding-left: 28px; }
.n3 { padding-left: 29.500px; }
.n5 { padding-left: 30px; }
.closing { margin-top: 23px; font-size: 13.333px; font-style: italic; font-weight: 700; }

/* Side panel */
.rail { width: 56px; display: flex; flex-direction: column; align-items: center; padding-top: 18px; gap: 36px; position: relative; }
.rail svg { width: 20px; height: 20px; }
.cal { font: 700 8px Roboto, sans-serif; fill: #4285f4; text-anchor: middle; }
.rail-rule { width: 20px; height: 1px; background: #dcdee0; margin: -2px 0 -2px; }
.rail-plus { stroke: #111; stroke-width: 2; }
.rail-more { margin-top: auto; margin-bottom: 2px; stroke: #222; stroke-width: 1.800; }

/* Taskbar */
.taskbar { height: 48px; flex: none; position: relative; display: flex; align-items: center; border-top: 1px solid #38444c; background: linear-gradient(90deg, #1b212b 0, #1b2230 200px, #152143 270px, #101f5b 400px, #122058 610px, #1a1e3c 770px, #161e48 850px, #10205a 910px, #1a1f2c 985px, #1b1f2a 100%); }
.widget { width: 215px; height: 30px; padding-left: 8px; margin-top: -8px; position: relative; }
.alert { position: absolute; left: 21px; top: 0; width: 16px; height: 16px; border-radius: 50%; background: #ff99a4; color: #111; font: 11px/16px "Noto Sans", sans-serif; text-align: center; }
.apps { display: flex; height: 47px; }
.app { width: 44px; height: 47px; display: grid; place-items: center; position: relative; }
.app > svg { width: 24px; height: 24px; z-index: 1; margin-top: -1px; }
.run::after, .current::after { content: ""; position: absolute; left: 19px; top: 39px; width: 6px; height: 3px; border-radius: 2px; background: #9297a6; }
.current::before { content: ""; position: absolute; inset: 3px 2px 4px; border-radius: 4px; background: #29346b; border: 1px solid #34406f; }
.current::after { left: 14px; width: 16px; background: #4cc2ff; }
.idm::after { content: ""; position: absolute; left: 10px; top: 39px; width: 24px; height: 3px; background: linear-gradient(90deg, #e5d62c 1px, #30343c 1px); }
.kbadge { position: absolute; z-index: 2; left: 23px; top: 6px; width: 15px; height: 15px; border-radius: 50%; background: #7e57c2; color: #fff; font: 9px/15px Roboto, sans-serif; text-align: center; }
.app > .warn { position: absolute; z-index: 2; left: 27px; top: 10px; width: 12px; height: 12px; margin: 0; }
.count12 { position: absolute; z-index: 2; left: 22px; top: 6px; width: 18px; height: 16px; border-radius: 8px; background: #4cc2ff; color: #111; font: 11px/15px "Noto Sans", sans-serif; letter-spacing: -.6px; text-align: center; }
.pre { font: 900 6.500px "Open Sans", sans-serif; fill: #15120a; text-anchor: middle; }
.teams { font: 700 10px "Open Sans", sans-serif; fill: #fff; text-anchor: middle; }
.tray { margin-left: auto; padding-right: 20px; display: flex; align-items: center; color: #fff; stroke: #fff; }
.tr { width: 32px; display: grid; place-items: center; }
.tr.spk, .tr.bat { width: 24px; }
.tray .spk { margin-left: -4px; }
.clock { width: 75px; display: flex; flex-direction: column; align-items: flex-end; font: 12px/16px "Noto Sans", sans-serif; letter-spacing: -.2px; stroke: none; margin-top: -1px; }
.day { letter-spacing: -.15px; white-space: nowrap; }
.bell { width: 16px; height: 16px; margin-left: 7px; stroke: none; }
```
